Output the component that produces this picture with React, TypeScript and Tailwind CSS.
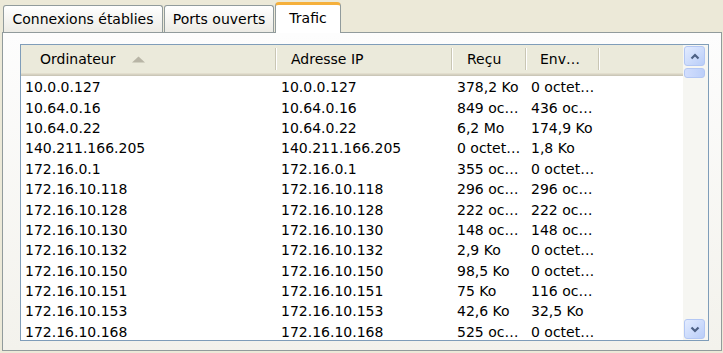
import type { ReactNode } from 'react';

const rows: [string, string, string, string][] = [
  ['10.0.0.127', '10.0.0.127', '378,2 Ko', '0 octet…'],
  ['10.64.0.16', '10.64.0.16', '849 oc…', '436 oc…'],
  ['10.64.0.22', '10.64.0.22', '6,2 Mo', '174,9 Ko'],
  ['140.211.166.205', '140.211.166.205', '0 octet…', '1,8 Ko'],
  ['172.16.0.1', '172.16.0.1', '355 oc…', '0 octet…'],
  ['172.16.10.118', '172.16.10.118', '296 oc…', '296 oc…'],
  ['172.16.10.128', '172.16.10.128', '222 oc…', '222 oc…'],
  ['172.16.10.130', '172.16.10.130', '148 oc…', '148 oc…'],
  ['172.16.10.132', '172.16.10.132', '2,9 Ko', '0 octet…'],
  ['172.16.10.150', '172.16.10.150', '98,5 Ko', '0 octet…'],
  ['172.16.10.151', '172.16.10.151', '75 Ko', '116 oc…'],
  ['172.16.10.153', '172.16.10.153', '42,6 Ko', '32,5 Ko'],
  ['172.16.10.168', '172.16.10.168', '525 oc…', '0 octet…'],
];

const columnWidths = ['w-[256px]', 'w-[176px]', 'w-[74px]', 'w-[73px]'];

function Tab({ children, className }: { children: ReactNode; className: string }) {
  return (
    <div
      className={`flex h-[27px] items-center justify-center rounded-t-[3px] border border-b-0 border-[#919b9c] bg-linear-to-b from-white to-[#ecebe5] pt-[1px] ${className}`}
    >
      {children}
    </div>
  );
}

function Divider() {
  return <div className="ml-auto h-[22px] w-[2px] shrink-0 border-l border-r border-l-[#c9c6b4] border-r-white" />;
}

function HeaderCell({ label, width, pad, children }: { label: string; width: string; pad: string; children?: ReactNode }) {
  return (
    <div className={`flex h-full shrink-0 items-center ${width}`}>
      <span className={`whitespace-nowrap ${pad}`}>{label}</span>
      {children}
      <Divider />
    </div>
  );
}

function ScrollButton({ up }: { up: boolean }) {
  return (
    <div className="flex h-[20px] w-[21px] items-center justify-center rounded-[3px] border border-[#b3c7f4] bg-linear-to-br from-[#e3ecff] to-[#b9cdf8]">
      <svg width="10" height="7" viewBox="0 0 10 7">
        <polyline
          points={up ? '1.5,5.5 5,2 8.5,5.5' : '1.5,1.5 5,5 8.5,1.5'}
          fill="none"
          stroke="#4d6185"
          strokeWidth="2.2"
        />
      </svg>
    </div>
  );
}

export default function App() {
  return (
    <div className="h-[353px] w-[723px] overflow-hidden bg-[#ece9d8] font-['DejaVu_Sans',sans-serif] text-[14px] text-black">
      <div className="flex h-[32px] items-end pl-[3px]">
        <Tab className="w-[160px]">Connexions établies</Tab>
        <Tab className="ml-[1px] w-[110px]">Ports ouverts</Tab>
        <div className="relative z-10 mb-[-1px] ml-[1px] flex h-[31px] w-[66px] items-center justify-center rounded-t-[4px] border-x border-t-[3px] border-x-[#919b9c] border-t-[#f5b03c] bg-white pb-[1px]">
          Trafic
        </div>
      </div>

      <div className="ml-[2px] h-[319px] w-[720px] border border-[#919b9c] bg-linear-to-b from-[#fdfdfd] to-[#f3f2ec] pl-[17px] pt-[11px]">
        <div className="flex h-[297px] w-[689px] overflow-hidden border border-[#7f9db9] bg-white">
          <div className="flex min-w-0 flex-1 flex-col">
            <div className="flex h-[31px] shrink-0 items-center bg-[#ebeadb] pb-[3px] shadow-[inset_0_-1px_0_#cbc7b8,inset_0_-2px_0_#d6d2c2,inset_0_-3px_0_#e2dece]">
              <HeaderCell label="Ordinateur" width={columnWidths[0]} pad="pl-[19px]">
                <svg width="15" height="7" viewBox="0 0 15 7" className="ml-[15px]">
                  <polygon points="1,6.5 7.5,0.5 14,6.5" fill="#b8b5a6" />
                </svg>
              </HeaderCell>
              <HeaderCell label="Adresse IP" width={columnWidths[1]} pad="pl-[14px]" />
              <HeaderCell label="Reçu" width={columnWidths[2]} pad="pl-[14px]" />
              <HeaderCell label="Env…" width={columnWidths[3]} pad="pl-[13px]" />
              <div className="flex-1" />
            </div>
            <div className="pt-[1px]">
              {rows.map((row) => (
                <div key={row[0]} className="flex h-[20.4px] items-center leading-[20px]">
                  {row.map((value, i) => (
                    <div key={i} className={`shrink-0 overflow-hidden whitespace-nowrap pl-[4px] ${columnWidths[i]}`}>
                      {value}
                    </div>
                  ))}
                </div>
              ))}
            </div>
          </div>

          <div className="flex h-full w-[25px] shrink-0 flex-col bg-[#f6f6f2] pl-[1px] pt-[1px] pb-[1px]">
            <ScrollButton up />
            <div className="mt-[2px] h-[10px] w-[21px] rounded-[3px] border border-[#b3c7f4] bg-linear-to-r from-[#d2defd] to-[#bccff9]" />
            <div className="flex-1" />
            <ScrollButton up={false} />
          </div>
        </div>
      </div>
    </div>
  );
}
